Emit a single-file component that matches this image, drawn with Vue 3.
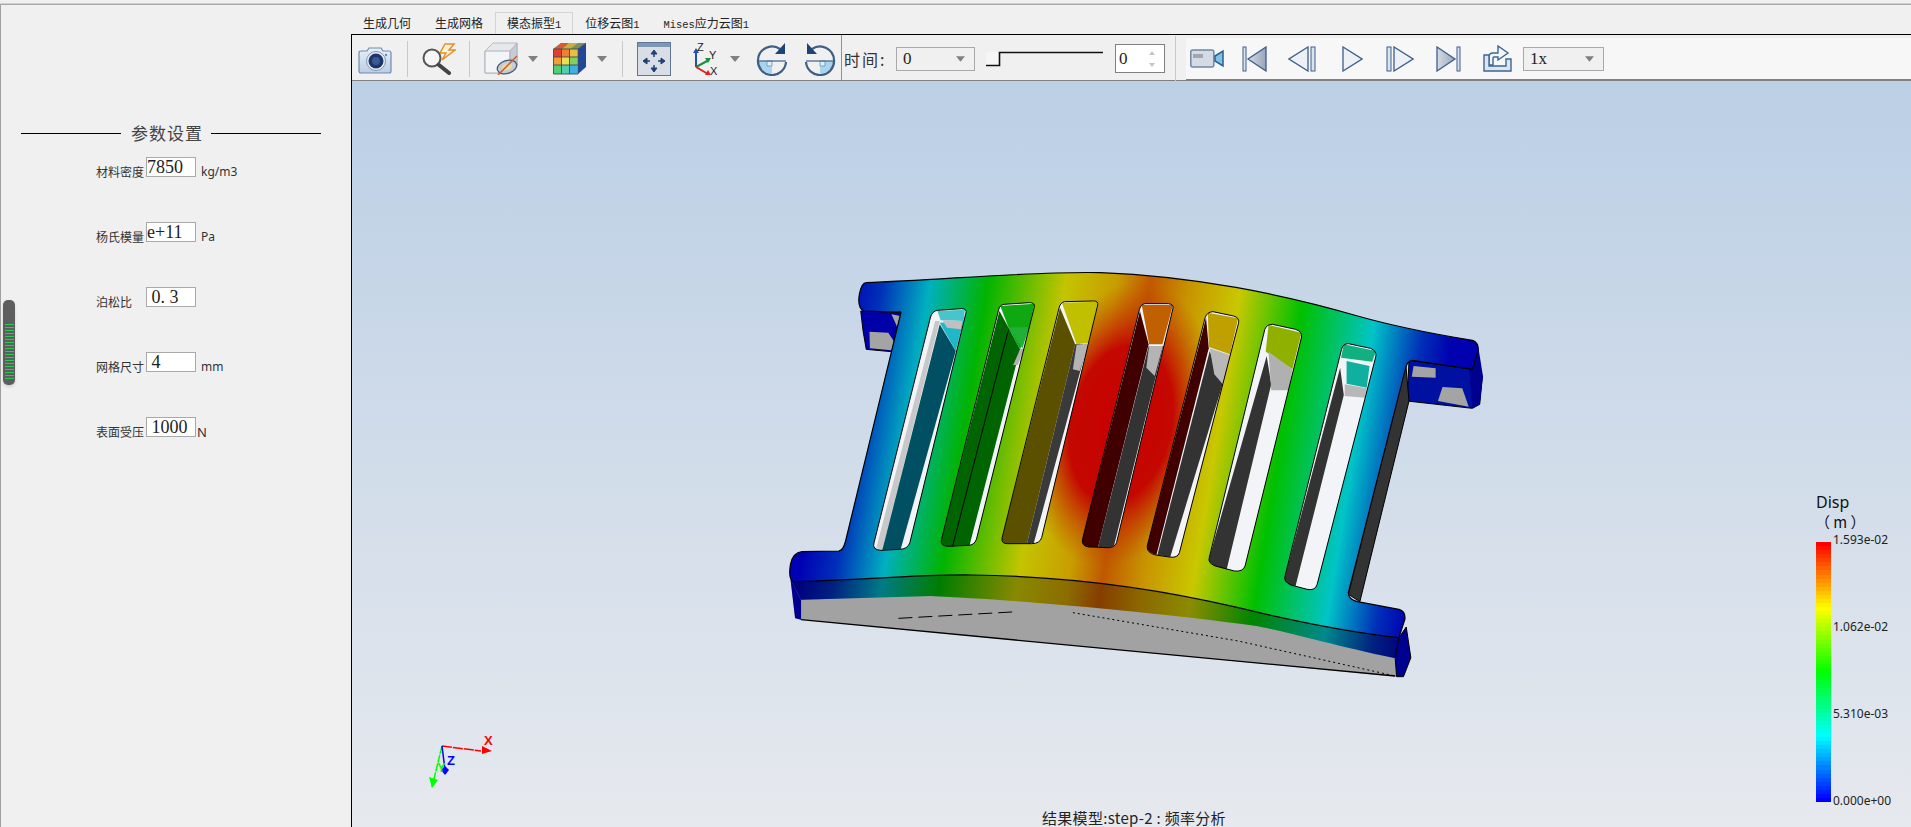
<script setup>
const fields = [
  { label: '材料密度', value: '7850', unit: 'kg/m3' },
  { label: '杨氏模量', value: 'e+11', unit: 'Pa' },
  { label: '泊松比', value: ' 0. 3', unit: '' },
  { label: '网格尺寸', value: ' 4', unit: 'mm' },
  { label: '表面受压', value: ' 1000', unit: 'N', tight: true }
]
const stripes = Array.from({ length: 19 })
const bands = Array.from({ length: 64 }, (_, i) => {
  const t = (i / 63) * 4
  const seg = Math.min(Math.floor(t), 3)
  const f = Math.round((t - seg) * 255)
  const colors = [
    `rgb(255,${f},0)`,
    `rgb(${255 - f},255,0)`,
    `rgb(0,255,${f})`,
    `rgb(0,${255 - f},255)`
  ]
  return colors[seg]
})
const legend = ['1.593e-02', '1.062e-02', '5.310e-03', '0.000e+00']
</script>

<template>
  <div class="app">
    <div class="topline"></div>
    <div class="main">
      <aside class="side">
        <div class="title"><i></i><span>参数设置</span><i></i></div>
        <div class="form">
          <div v-for="f in fields" :key="f.label" class="row">
            <span class="label">{{ f.label }}</span>
            <input class="field" :value="f.value" readonly />
            <span class="unit" :class="{ tight: f.tight }">{{ f.unit }}</span>
          </div>
        </div>
        <div class="grip">
          <b v-for="(s, i) in stripes" :key="i"></b>
        </div>
      </aside>

      <section class="work">
        <nav class="tabs">
          <span class="tab">生成几何</span>
          <span class="tab">生成网格</span>
          <span class="tab active">模态振型<em>1</em></span>
          <span class="tab">位移云图<em>1</em></span>
          <span class="tab"><em>Mises</em>应力云图<em>1</em></span>
        </nav>
        <div class="frame">
          <div class="toolbar">
            <div class="tools">
              <svg class="t-camera" width="34" height="27" viewBox="0 0 34 27">
                <defs>
                  <linearGradient id="gBody" x1="0" y1="0" x2="0" y2="1">
                    <stop offset="0" stop-color="#e8f0f8" /><stop offset="1" stop-color="#bccde2" />
                  </linearGradient>
                  <linearGradient id="gPlay" x1="0" y1="0" x2="1" y2="0">
                    <stop offset="0" stop-color="#d5dbe4" /><stop offset="1" stop-color="#98a6b8" />
                  </linearGradient>
                </defs>
                <path d="M1 6 Q1 4 3 4 H9 L11 1 H23 L25 4 H31 Q33 4 33 6 V24 Q33 26 31 26 H3 Q1 26 1 24Z" fill="url(#gBody)" stroke="#6d8cb0" stroke-width="1.2" />
                <circle cx="18" cy="14" r="9.5" fill="#e6edf5" stroke="#7d97b6" />
                <circle cx="18" cy="14" r="7.5" fill="#1d3567" />
                <circle cx="18" cy="14" r="4" fill="#3a5a96" />
                <circle cx="28" cy="8" r="1.2" fill="#6d8cb0" />
              </svg>
              <i class="sep s1"></i>
              <svg class="t-zoom" width="35" height="32" viewBox="0 0 35 32">
                <path d="M24 1 L33 1 L28 7 L34 7 L21 17 L25 10 L19 10Z" fill="#fff3d8" stroke="#e2902a" stroke-width="1.5" />
                <circle cx="11" cy="15" r="8.5" fill="#f6f6f6" stroke="#555" stroke-width="2" />
                <path d="M18 22 L28 30" stroke="#444" stroke-width="4" stroke-linecap="round" />
              </svg>
              <i class="sep s2"></i>
              <svg class="t-box" width="34" height="33" viewBox="0 0 34 33">
                <path d="M1 9 L9 1 H33 V23 L26 31 H1Z" fill="#e6e8ec" stroke="#b4bcc8" />
                <path d="M1 9 H26 V31 H1Z" fill="#f3f4f6" stroke="#aab2be" />
                <path d="M26 9 L33 1 V23 L26 31Z" fill="#c7ccd4" stroke="#aab2be" />
                <ellipse cx="23" cy="25" rx="10" ry="6.5" fill="#c4cbd4" stroke="#44597a" stroke-width="1.3" transform="rotate(-18 23 25)" />
                <ellipse cx="23" cy="25" rx="5.5" ry="3.5" fill="#e8d9a8" transform="rotate(-18 23 25)" />
                <path d="M14 33 L33 14" stroke="#d05a25" stroke-width="1.5" />
              </svg>
              <svg class="drop d1" width="10" height="6" viewBox="0 0 10 6"><path d="M0 0H10L5 6Z" /></svg>
              <svg class="t-cube" width="33" height="33" viewBox="0 0 33 33">
                <path d="M25 7 L33 1 V25 L25 32Z" fill="#2046a0" />
                <path d="M0 7 L8 1 H33 L25 7Z" fill="#7d8f5a" />
                <path d="M8 1 H16 L9 7 H1Z" fill="#d85a30" /><path d="M16 1 H25 L17 7 H9Z" fill="#c8b040" />
                <rect x="0.5" y="7" width="8" height="8" fill="#e04030" /><rect x="8.5" y="7" width="8" height="8" fill="#f08030" /><rect x="16.5" y="7" width="8" height="8" fill="#e8c040" />
                <rect x="0.5" y="15" width="8" height="8" fill="#f0a030" /><rect x="8.5" y="15" width="8" height="8" fill="#e8e050" /><rect x="16.5" y="15" width="8" height="8" fill="#80d060" />
                <rect x="0.5" y="23" width="8" height="9" fill="#50d070" /><rect x="8.5" y="23" width="8" height="9" fill="#50d0b0" /><rect x="16.5" y="23" width="8" height="9" fill="#40b0e0" />
                <path d="M.5 7 H25 V32 H.5Z M8.5 7 V32 M16.5 7 V32 M.5 15 H25 M.5 23 H25 M25 7 L33 1 M25 15 L33 9 M25 23 L33 17" fill="none" stroke="#3c4a5c" stroke-width=".9" />
              </svg>
              <svg class="drop d2" width="10" height="6" viewBox="0 0 10 6"><path d="M0 0H10L5 6Z" /></svg>
              <i class="sep s3"></i>
              <svg class="t-fit" width="34" height="34" viewBox="0 0 34 34">
                <rect x=".5" y=".5" width="33" height="33" fill="#d8dde6" stroke="#5f7895" />
                <rect x="1" y="1" width="32" height="4" fill="#7f96b4" />
                <g fill="#1f3f73" stroke="#1f3f73">
                  <path d="M17 8 L14 12 H20Z M17 30 L14 26 H20Z M6 19 L10 16 V22Z M28 19 L24 16 V22Z" />
                  <path d="M17 12 V15 M17 23 V26 M10 19 H13 M21 19 H24" stroke-width="1.5" />
                </g>
              </svg>
              <svg class="t-axes" width="29" height="34" viewBox="0 0 29 34">
                <path d="M6 25 V9" stroke="#2050b0" stroke-width="2" /><path d="M6 6 L3 11 H9Z" fill="#2050b0" />
                <path d="M6 25 L19 18" stroke="#1a9040" stroke-width="2" /><path d="M21 16 L15 16 L18 21Z" fill="#1a9040" />
                <path d="M6 25 L18 32" stroke="#e02020" stroke-width="2" /><path d="M21 33 L15 33 L18 28Z" fill="#e02020" />
                <text x="7" y="9" class="axt">Z</text><text x="19" y="17" class="axt">Y</text><text x="20" y="33" class="axt">X</text>
              </svg>
              <svg class="drop d3" width="10" height="6" viewBox="0 0 10 6"><path d="M0 0H10L5 6Z" /></svg>
              <svg class="t-rot1" width="32" height="34" viewBox="0 0 32 34">
                <path d="M3 19 H16 V32 A13.500 13.500 0 0 1 3 19Z" fill="#a8d4f0" />
                <path d="M11 19 H16 V24 H11Z" fill="#e0eff8" stroke="#5c86ad" stroke-width=".7" />
                <path d="M24 7 A14 14 0 0 0 2 18 A14 14 0 0 0 30 20" fill="none" stroke="#3d5f86" stroke-width="2.2" />
                <path d="M2 19 H30" stroke="#3d5f86" stroke-width="1.2" />
                <path d="M29 1 V12 H19Z" fill="#1d4476" />
              </svg>
              <svg class="t-rot2" width="32" height="34" viewBox="0 0 32 34">
                <g transform="translate(32 0) scale(-1 1)">
                  <path d="M3 19 H16 V32 A13.500 13.500 0 0 1 3 19Z" fill="#a8d4f0" />
                  <path d="M11 19 H16 V24 H11Z" fill="#e0eff8" stroke="#5c86ad" stroke-width=".7" />
                  <path d="M24 7 A14 14 0 0 0 2 18 A14 14 0 0 0 30 20" fill="none" stroke="#3d5f86" stroke-width="2.2" />
                  <path d="M2 19 H30" stroke="#3d5f86" stroke-width="1.2" />
                  <path d="M29 1 V12 H19Z" fill="#1d4476" />
                </g>
              </svg>
              <i class="sep s4"></i>
              <span class="time">时间:</span>
              <div class="combo c-time"><span>0</span><svg width="9" height="6" viewBox="0 0 10 6"><path d="M0 0H10L5 6Z" /></svg></div>
              <svg class="slider" width="118" height="16" viewBox="0 0 118 16">
                <rect x="0" y="1" width="13" height="14" fill="#f6f6f6" />
                <path d="M0 14.500 H13.500 V1.500 H117" fill="none" stroke="#111" stroke-width="1.600" />
              </svg>
              <div class="spin"><span>0</span>
                <svg width="8" height="18" viewBox="0 0 8 18"><path d="M1 5 L4 1 L7 5Z M1 13 L4 17 L7 13Z" fill="#c4c4c4" /></svg>
              </div>
              <i class="sep s5"></i>
            </div>
            <div class="player">
              <svg class="p-cam" width="34" height="19" viewBox="0 0 34 19">
                <rect x=".8" y="1" width="23" height="17" rx="2" fill="#d5dbe4" stroke="#6d88a8" stroke-width="1.500" />
                <rect x="3" y="5" width="10" height="4" fill="#a0a6ae" />
                <path d="M25 7 L33 2 V17 L25 12Z" fill="#7ac4e4" stroke="#2e5f8e" stroke-width="1.500" />
              </svg>
              <svg class="p-first" width="26" height="26" viewBox="0 0 26 26">
                <rect x="1" y="1" width="3" height="24" fill="#dbe3ee" stroke="#3c5f8c" />
                <path d="M24 1 V25 L6 13Z" fill="url(#gPlay)" stroke="#3c5f8c" stroke-width="1.300" />
              </svg>
              <svg class="p-prev" width="29" height="26" viewBox="0 0 29 26">
                <path d="M20 1 V25 L1 13Z" fill="#edf1f6" stroke="#3c5f8c" stroke-width="1.300" />
                <rect x="23" y="1" width="4" height="24" fill="#dbe3ee" stroke="#3c5f8c" />
              </svg>
              <svg class="p-play" width="21" height="26" viewBox="0 0 21 26">
                <path d="M1 1 V25 L20 13Z" fill="#edf1f6" stroke="#3c5f8c" stroke-width="1.300" />
              </svg>
              <svg class="p-next" width="28" height="26" viewBox="0 0 28 26">
                <rect x="1" y="1" width="4" height="24" fill="#dbe3ee" stroke="#3c5f8c" />
                <path d="M8 1 V25 L27 13Z" fill="#edf1f6" stroke="#3c5f8c" stroke-width="1.300" />
              </svg>
              <svg class="p-last" width="26" height="26" viewBox="0 0 26 26">
                <path d="M2 1 V25 L20 13Z" fill="url(#gPlay)" stroke="#3c5f8c" stroke-width="1.300" />
                <rect x="22" y="1" width="3" height="24" fill="#dbe3ee" stroke="#3c5f8c" />
              </svg>
              <svg class="p-export" width="29" height="27" viewBox="0 0 29 27">
                <path d="M6 20 V12 Q6 8 10 8 H15 V1 L25 8 L15 15 V12 H11 Q10 12 10 13 V20Z" fill="#f3f6fa" stroke="#3d6592" stroke-width="1.400" />
                <path d="M1 10 V26 H28 V14 H23 V21 H6 V10Z" fill="#dde6f0" stroke="#3d6592" stroke-width="1.400" />
              </svg>
              <div class="combo c-speed"><span>1x</span><svg width="9" height="6" viewBox="0 0 10 6"><path d="M0 0H10L5 6Z" /></svg></div>
            </div>
          </div>

          <div class="viewport">
            <svg class="model" viewBox="0 0 1568 1290" preserveAspectRatio="none" width="720" height="430">
              <defs>
                <linearGradient id="heat" gradientUnits="userSpaceOnUse" x1="150" y1="0" x2="1490" y2="155">
                  <stop offset="0" stop-color="#0000b4" /><stop offset=".06" stop-color="#0030b8" />
                  <stop offset=".137" stop-color="#00b0c0" /><stop offset=".23" stop-color="#00b400" />
                  <stop offset=".355" stop-color="#c4c400" /><stop offset=".437" stop-color="#c89c00" />
                  <stop offset=".49" stop-color="#c05800" /><stop offset=".555" stop-color="#c89400" />
                  <stop offset=".637" stop-color="#c8c800" /><stop offset=".74" stop-color="#00c000" />
                  <stop offset=".86" stop-color="#00c4c8" /><stop offset=".94" stop-color="#0030b8" />
                  <stop offset=".99" stop-color="#0000b0" />
                </linearGradient>
                <radialGradient id="core" gradientUnits="userSpaceOnUse" cx="0" cy="0" r="1" gradientTransform="translate(745 490) rotate(6.800) scale(200 430)">
                  <stop offset="0" stop-color="#c80000" /><stop offset=".55" stop-color="#c40800" />
                  <stop offset="1" stop-color="#c04000" stop-opacity="0" />
                </radialGradient>
              </defs>

              <!-- undersides of the end lugs -->
              <path d="M178 150 L265 155 L245 272 L190 265 Q182 210 178 150Z" fill="#0000a8" stroke="#000" />
              <path d="M197 212 L238 215 L250 240 L245 268 L198 262Z" fill="#a4a4a4" />
              <path d="M245 160 L264 165 L257 197Z" fill="#a4a4a4" />
              <path d="M1372 298 L1510 325 L1532 345 L1526 430 L1510 442 L1368 420Z" fill="#0010a0" stroke="#000" />
              <path d="M1382 315 L1430 322 L1430 350 L1378 347Z" fill="#a4a4a4" />
              <path d="M1435 420 L1445 378 L1488 382 L1502 437Z" fill="#a4a4a4" />
              <path d="M1522 250 L1533 345 L1526 430 L1510 442 L1503 325Z" fill="#000090" />
              <path d="M1365 310 L1372 420 L1265 1022 L1240 1000Z" fill="#333" stroke="#000" />

              <!-- front face -->
              <path d="M25 955 C150 960 300 940 420 942 C600 945 800 975 1000 1040 C1120 1080 1250 1115 1350 1130 L1345 1247 L50 1076 L35 1070Z" fill="#a2a2a2" />
              <path d="M26 958 C150 960 300 940 420 942 C600 945 800 975 1000 1040 C1120 1080 1250 1115 1350 1130 L1342 1192 C1200 1150 1100 1110 1040 1095 C800 1050 500 1015 330 1005 L48 1016Z" fill="url(#heat)" />
              <path d="M26 958 C150 960 300 940 420 942 C600 945 800 975 1000 1040 C1120 1080 1250 1115 1350 1130 L1342 1192 C1200 1150 1100 1110 1040 1095 C800 1050 500 1015 330 1005 L48 1016Z" fill="#000" fill-opacity=".3" />
              <path d="M25 955 L48 1016 L48 1076 L35 1072Z" fill="#000090" />
              <path d="M1350 1130 L1366 1098 L1376 1190 L1360 1247 L1345 1247 L1342 1192Z" fill="#000090" stroke="#000" />
              <path d="M48 1076 L1342 1245" fill="none" stroke="#000" stroke-width="1.300" />
              <path d="M260 1072 L520 1052" fill="none" stroke="#000" stroke-dasharray="14 6" />
              <path d="M640 1055 L1000 1140 L1342 1245" fill="none" stroke="#000" stroke-dasharray="2 3" />

              <!-- top surface -->
              <path d="M190 65 C350 58 550 30 700 35 C900 45 1100 100 1260 165 C1350 200 1430 220 1510 238 Q1525 245 1522 270 L1510 325 L1380 298 Q1368 300 1365 320 L1240 995 Q1240 1015 1260 1022 L1350 1045 Q1365 1050 1363 1075 L1350 1130 C1250 1115 1120 1080 1000 1040 C800 975 600 945 420 942 C300 940 150 960 30 962 Q20 950 25 910 Q30 875 50 872 L130 870 Q140 868 145 840 L265 158 Q268 150 255 153 L185 150 Q170 140 175 100 Q180 65 190 65Z" fill="url(#heat)" stroke="#000" stroke-width="1.200" />
              <path d="M190 65 C350 58 550 30 700 35 C900 45 1100 100 1260 165 C1350 200 1430 220 1510 238 Q1525 245 1522 270 L1510 325 L1380 298 Q1368 300 1365 320 L1240 995 Q1240 1015 1260 1022 L1350 1045 Q1365 1050 1363 1075 L1350 1130 C1250 1115 1120 1080 1000 1040 C800 975 600 945 420 942 C300 940 150 960 30 962 Q20 950 25 910 Q30 875 50 872 L130 870 Q140 868 145 840 L265 158 Q268 150 255 153 L185 150 Q170 140 175 100 Q180 65 190 65Z" fill="url(#core)" />

              <!-- slots -->
              <path class="hole" d="M345 148 L398 143 Q410 143 407 157 L285 845 Q280 865 262 865 L222 868 Q202 866 207 845 L330 168 Q334 150 345 148Z" />
              <path d="M340 180 L350 180 L225 868 L212 860Z" fill="#c8c8c8" />
              <path d="M350 190 L385 270 L265 865 L225 867Z" fill="#004f62" />
              <path d="M345 150 L405 146 L402 180 L352 178Z" fill="#48c4cc" />
              <path d="M350 185 L402 180 L385 270Z" fill="#20b8c8" />
              <path d="M356 178 L400 180 L396 205 L366 200Z" fill="#c0c0c0" />
              <path class="edge" d="M345 148 L398 143 Q410 143 407 157 L285 845 Q280 865 262 865 L222 868 Q202 866 207 845 L330 168 Q334 150 345 148Z" />

              <path class="hole" d="M490 130 L545 125 Q558 125 556 138 L430 835 Q425 853 412 853 L368 856 Q350 855 354 835 L478 148 Q480 132 490 130Z" />
              <path d="M480 150 L500 200 L525 265 L415 853 L368 856 Q350 855 354 835Z" fill="#006400" />
              <path d="M482 135 L556 128 L545 200 L525 265 L500 200Z" fill="#10a810" />
              <path d="M500 200 L545 198 L530 262Z" fill="#1fb038" />
              <path d="M525 265 L535 262 L520 312 L510 312Z" fill="#b0b0b0" />
              <path d="M500 205 L378 856" stroke="#000" fill="none" />
              <path class="edge" d="M490 130 L545 125 Q558 125 556 138 L430 835 Q425 853 412 853 L368 856 Q350 855 354 835 L478 148 Q480 132 490 130Z" />

              <path class="hole" d="M622 122 L685 120 Q696 120 694 132 L572 830 Q568 848 550 848 L497 848 Q483 848 486 830 L610 140 Q613 124 622 122Z" />
              <path d="M612 140 L645 250 L540 848 L497 848 Q483 848 486 830Z" fill="#5a5000" />
              <path d="M645 250 L672 250 L555 846 L540 848Z" fill="#3a3a3a" />
              <path d="M616 125 L694 122 L675 245 L648 250Z" fill="#c0c000" />
              <path d="M648 252 L675 247 L655 330 L640 325Z" fill="#b4b4b4" />
              <path class="edge" d="M622 122 L685 120 Q696 120 694 132 L572 830 Q568 848 550 848 L497 848 Q483 848 486 830 L610 140 Q613 124 622 122Z" />

              <path class="hole" d="M797 128 L848 128 Q860 130 858 142 L735 845 Q730 862 715 860 L675 858 Q658 855 661 835 L785 145 Q788 130 797 128Z" />
              <path d="M786 150 L805 250 L695 858 L675 858 Q658 855 661 835Z" fill="#400000" />
              <path d="M805 255 L837 255 L730 852 Q728 860 715 860 L695 858Z" fill="#333" />
              <path d="M790 132 L858 132 L835 250 L806 250Z" fill="#c06000" />
              <path d="M806 255 L836 255 L818 345 L800 320Z" fill="#b4b4b4" />
              <path class="edge" d="M797 128 L848 128 Q860 130 858 142 L735 845 Q730 862 715 860 L675 858 Q658 855 661 835 L785 145 Q788 130 797 128Z" />

              <path class="hole" d="M945 152 L990 165 Q1003 170 1001 185 L872 875 Q868 892 850 888 L820 882 Q800 875 802 855 L928 170 Q932 153 945 152Z" />
              <path d="M930 170 L936 262 L822 882 Q800 875 802 855Z" fill="#400000" />
              <path d="M938 270 L966 370 L852 888 L824 882Z" fill="#333" />
              <path d="M934 155 L1000 172 L982 280 L936 258Z" fill="#c0a000" />
              <path d="M938 262 L982 282 L968 372 L948 340Z" fill="#b8b8b8" />
              <path class="edge" d="M945 152 L990 165 Q1003 170 1001 185 L872 875 Q868 892 850 888 L820 882 Q800 875 802 855 L928 170 Q932 153 945 152Z" />

              <path class="hole" d="M1075 190 L1125 205 Q1140 212 1138 228 L1015 915 Q1010 933 992 930 L950 915 Q933 905 937 890 L1058 205 Q1062 190 1075 190Z" />
              <path d="M1062 285 L1072 370 L975 925 L950 915 Q933 905 937 890Z" fill="#333" />
              <path d="M1066 192 L1138 215 L1118 325 L1060 272Z" fill="#90b000" />
              <path d="M1066 272 L1118 325 L1110 388 L1072 388Z" fill="#b0b0b0" />
              <path class="edge" d="M1075 190 L1125 205 Q1140 212 1138 228 L1015 915 Q1010 933 992 930 L950 915 Q933 905 937 890 L1058 205 Q1062 190 1075 190Z" />

              <path class="hole" d="M1240 248 L1288 262 Q1302 270 1300 285 L1172 970 Q1168 990 1150 985 L1115 972 Q1098 962 1102 945 L1225 265 Q1228 248 1240 248Z" />
              <path d="M1222 320 L1230 402 L1125 975 L1115 972 Q1098 962 1102 945Z" fill="#333" />
              <path d="M1230 250 L1300 270 L1292 302 L1224 290Z" fill="#10b080" />
              <path d="M1236 300 L1286 315 L1280 380 L1236 368Z" fill="#10b0a0" />
              <path d="M1232 370 L1280 382 L1276 410 L1232 405Z" fill="#b8b8b8" />
              <path class="edge" d="M1240 248 L1288 262 Q1302 270 1300 285 L1172 970 Q1168 990 1150 985 L1115 972 Q1098 962 1102 945 L1225 265 Q1228 248 1240 248Z" />
            </svg>

            <svg class="triad" width="100" height="80" viewBox="0 0 100 80">
              <path d="M33 26 L72 31" stroke="#f00" stroke-width="1.500" stroke-dasharray="10 1" fill="none" />
              <path d="M73 26 L83 31 L73 34Z" fill="#f00" />
              <path d="M33 26 L23 67" stroke="#0f0" stroke-width="1.500" stroke-dasharray="8 1" fill="none" />
              <path d="M20 57 L29 60 L23 68Z" fill="#0f0" />
              <path d="M33 26 L36 50" stroke="#00f" stroke-width="1.500" fill="none" />
              <path d="M36 46 L40 50 L36 55 L32 50Z" fill="#00f" />
              <text x="75" y="25" class="tx" fill="#f00">X</text>
              <text x="28" y="52" class="tx" fill="#0f0">Y</text>
              <text x="38" y="45" class="tx" fill="#00f">Z</text>
            </svg>

            <div class="legend">
              <div class="legend-title">Disp<br /><span>（ m ）</span></div>
              <div class="legend-body">
                <div class="bar"><i v-for="(c, i) in bands" :key="i" :style="{ background: c }"></i></div>
                <div class="ticks"><span v-for="l in legend" :key="l">{{ l }}</span></div>
              </div>
            </div>

            <div class="caption">结果模型:step-2 : 频率分析</div>
          </div>
        </div>
      </section>
    </div>
  </div>
</template>

<style scoped>
.app { width: 1911px; height: 827px; overflow: hidden; display: flex; flex-direction: column; background: #f0f0f0; font-family: "Noto Sans CJK SC", sans-serif; color: #222; }
.topline { height: 2px; margin-top: 3px; background: linear-gradient(#d0d0d0 50%, #a8a8a8 50%); flex: none; }
.main { flex: 1; display: flex; min-height: 0; }
.side { width: 351px; flex: none; border-left: 1px solid #a0a0a0; box-sizing: border-box; position: relative; padding-top: 118px; }
.title { display: flex; align-items: center; margin-left: 20px; width: 300px; height: 20px; }
.title i { width: 100px; flex: none; height: 1px; background: #000; }
.title i:last-child { width: 110px; }
.title span { width: 90px; flex: none; box-sizing: border-box; padding-left: 10px; font-size: 17px; letter-spacing: 1px; color: #444; line-height: 20px; white-space: nowrap; }
.form { padding-left: 95px; margin-top: 14px; display: flex; flex-direction: column; gap: 45px; }
.row { display: flex; height: 20px; align-items: flex-start; }
.label { width: 50px; flex: none; font-size: 12px; line-height: 16px; padding-top: 7px; color: #333; }
.field { width: 50px; height: 20px; box-sizing: border-box; border: 1px solid #a9a9a9; background: #fff; padding: 0; margin: 0; font: 18px/18px "Liberation Serif", serif; color: #222; white-space: pre; outline: none; border-radius: 0; }
.unit { font: 12px/16px "Noto Sans", sans-serif; padding: 7px 0 0 5px; color: #333; }
.unit.tight { padding-left: 1px; font-size: 13px; }
.grip { position: absolute; left: 2px; top: 295px; width: 12px; height: 85px; box-sizing: border-box; border-radius: 5px; background: #5e5e5e; box-shadow: 0 2px 3px rgba(0, 0, 0, .12); padding-top: 24px; display: flex; flex-direction: column; align-items: center; gap: 2px; overflow: hidden; }
.grip b { display: block; width: 9px; height: 1px; flex: none; background: #1fd050; }
.work { flex: 1; min-width: 0; display: flex; flex-direction: column; }
.tabs { height: 29px; flex: none; display: flex; align-items: flex-end; font-size: 12px; }
.tab { height: 22px; line-height: 22px; padding: 0 12px; box-sizing: border-box; color: #222; white-space: nowrap; }
.tab.active { border: 1px solid #d4d4d4; border-bottom: 0; line-height: 20px; padding: 0 11px; }
.tab em { font: normal 10.400px "Liberation Mono", monospace; }
.frame { flex: 1; min-height: 0; border-top: 1px solid #000; border-left: 1px solid #000; display: flex; flex-direction: column; }
.toolbar { height: 46px; flex: none; display: flex; background: #f0f0f0; }
.tools { width: 834px; flex: none; display: flex; align-items: center; border-bottom: 1px solid #808080; height: 46px; box-sizing: border-box; padding-top: 2px; }
.sep { width: 1px; height: 36px; background: #c8c8c8; flex: none; }
.t-camera { margin-left: 6px; margin-top: 3px; }
.s1 { margin-left: 15px; }
.t-zoom { margin-left: 13px; }
.s2 { margin-left: 13px; }
.t-box { margin-left: 14px; }
.drop { fill: #808080; flex: none; }
.d1 { margin-left: 10px; }
.t-cube { margin-left: 15px; }
.d2 { margin-left: 11px; }
.s3 { margin-left: 15px; }
.t-fit { margin-left: 14px; }
.t-axes { margin-left: 19px; }
.d3 { margin-left: 11px; }
.t-rot1 { margin-left: 16px; }
.t-rot2 { margin-left: 16px; }
.s4 { margin-left: 5px; height: 45px; background: #909090; align-self: flex-end; }
.axt { font: 11px "Liberation Sans", sans-serif; fill: #222; }
.time { margin-left: 2px; width: 41px; font-size: 16px; color: #333; white-space: nowrap; letter-spacing: 2px; }
.combo { height: 24px; box-sizing: border-box; border: 1px solid #a9a9a9; background: #f0f0f0; display: flex; align-items: center; justify-content: space-between; padding: 0 9px 0 6px; font: 17px "Liberation Serif", serif; flex: none; }
.combo svg { fill: #808080; }
.c-time { width: 79px; margin-left: 11px; }
.slider { margin-left: 11px; flex: none; }
.spin { width: 50px; height: 29px; box-sizing: border-box; border: 1px solid #808080; background: #fff; margin-left: 11px; display: flex; align-items: center; justify-content: space-between; padding: 0 8px 0 3px; font: 17px "Liberation Serif", serif; flex: none; }
.s5 { margin-left: 10px; height: 45px; }
.player { flex: 1; margin-top: 3px; height: 43px; box-sizing: border-box; background: #f7f7f7; border-bottom: 2px solid #808080; display: flex; align-items: center; margin-left: 0; }
.p-cam { margin-left: 4px; }
.p-first { margin-left: 18px; }
.p-prev { margin-left: 20px; }
.p-play { margin-left: 25px; }
.p-next { margin-left: 23px; }
.p-last { margin-left: 21px; }
.p-export { margin-left: 22px; }
.c-speed { width: 81px; margin-left: 11px; }
.viewport { flex: 1; min-height: 0; position: relative; overflow: hidden; background: linear-gradient(#bbcfe5, #e6e9ee); }
.model { position: absolute; left: 427px; top: 180px; overflow: visible; }
.model path { vector-effect: non-scaling-stroke; }
.hole { fill: #f2f4f8; }
.edge { fill: none; stroke: #000; stroke-width: 1; }
.triad { position: absolute; left: 57px; top: 639px; }
.tx { font: bold 13px "Liberation Sans", sans-serif; }
.legend { position: absolute; left: 1464px; top: 412px; }
.legend-title { font: 16px/19px "Noto Sans", sans-serif; color: #111; height: 49px; }
.legend-title span { font-family: "Noto Sans CJK SC", sans-serif; font-size: 15px; margin-left: -1px; }
.legend-body { display: flex; gap: 2px; }
.bar { width: 15px; height: 260px; display: flex; flex-direction: column; }
.bar i { flex: 1; display: block; }
.ticks { height: 277px; margin-top: -10px; display: flex; flex-direction: column; justify-content: space-between; font: 12px/16px "Noto Sans", sans-serif; color: #222; white-space: nowrap; }
.caption { position: absolute; left: 690px; bottom: 0; font-size: 15px; line-height: 18px; letter-spacing: .3px; color: #222; white-space: nowrap; }
</style>
